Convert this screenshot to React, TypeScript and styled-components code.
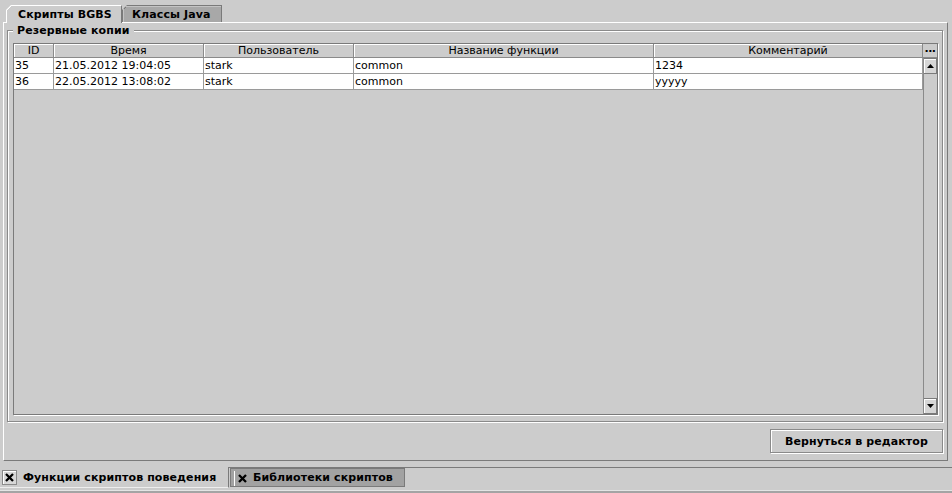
import React from 'react';
import styled, { createGlobalStyle } from 'styled-components';

const GlobalStyle = createGlobalStyle`
  html, body {
    margin: 0;
    padding: 0;
    background: #cccccc;
  }
  body {
    font-family: 'DejaVu Sans', 'Liberation Sans', sans-serif;
    font-size: 11px;
    color: #000;
  }
  * {
    box-sizing: border-box;
  }
`;

const Window = styled.div`
  width: 952px;
  height: 493px;
  display: flex;
  flex-direction: column;
  background: #cccccc;
  overflow: hidden;
`;

const Workspace = styled.div`
  height: 468px;
  border-bottom: 1px solid #7a7a7a;
  display: flex;
  flex-direction: column;
`;

const TopTabStrip = styled.div`
  height: 22px;
  display: flex;
  align-items: flex-end;
  padding-left: 6px;
  position: relative;
  z-index: 1;
`;

const TopTab = styled.div<{ $active?: boolean; $width: number }>`
  width: ${({ $width }) => $width}px;
  height: ${({ $active }) => ($active ? 18 : 17)}px;
  margin-bottom: ${({ $active }) => ($active ? -1 : 0)}px;
  padding: 2px 0 0 ${({ $active }) => ($active ? 11 : 9)}px;
  font-weight: bold;
  line-height: 13px;
  letter-spacing: 0.1px;
  white-space: nowrap;
  border-top: 1px solid ${({ $active }) => ($active ? '#ffffff' : '#7a7a7a')};
  border-left: 1px solid ${({ $active }) => ($active ? '#ffffff' : '#7a7a7a')};
  border-right: 1px solid #7a7a7a;
  background: linear-gradient(
    135deg,
    transparent 3.5px,
    ${({ $active }) => ($active ? '#ffffff' : '#7a7a7a')} 3.5px,
    ${({ $active }) => ($active ? '#ffffff' : '#7a7a7a')} 4.6px,
    ${({ $active }) => ($active ? '#cccccc' : '#a8a8a8')} 4.6px
  ) border-box;
  box-shadow: ${({ $active }) => ($active ? 'none' : 'inset 1px 1px 0 #c4c4c4')};
  clip-path: polygon(5px 0, 100% 0, 100% 100%, 0 100%, 0 5px);
`;

const TabPanel = styled.div`
  height: 439px;
  margin: 0 4px 0 3px;
  border: 1px solid;
  border-color: #ffffff #7a7a7a #7a7a7a #ffffff;
  display: flex;
  flex-direction: column;
`;

const GroupBox = styled.section`
  position: relative;
  flex: 1;
  min-height: 0;
  margin: 7px 4px 0 3px;
  padding: 12px 4px 6px 5px;
  border: 1px solid #8a8a8a;
  box-shadow: 1px 1px 0 #ffffff, inset 1px 1px 0 #ffffff;
  display: flex;
  flex-direction: column;
`;

const GroupTitle = styled.span`
  position: absolute;
  top: -7px;
  left: 5px;
  padding: 0 4px;
  background: #cccccc;
  font-weight: bold;
  line-height: 13px;
  letter-spacing: 0.1px;
`;

const TableFrame = styled.div`
  flex: 1;
  min-height: 0;
  display: flex;
  border: 1px solid #7a7a7a;
  box-shadow: 1px 1px 0 #ffffff;
`;

const TableBody = styled.div`
  flex: 1;
  display: flex;
  flex-direction: column;
  background: #cccccc;
`;

const Row = styled.div`
  display: grid;
  grid-template-columns: 40px 150px 150px 300px 269px;
`;

const HeaderCell = styled.div`
  height: 14px;
  line-height: 13px;
  text-align: center;
  white-space: nowrap;
  overflow: hidden;
  border-right: 1px solid #8a8a8a;
  border-bottom: 1px solid #8a8a8a;
  box-shadow: inset 1px 1px 0 #ffffff;
`;

const Cell = styled.div`
  height: 16px;
  line-height: 15px;
  padding-left: 1px;
  white-space: nowrap;
  overflow: hidden;
  background: #ffffff;
  border-right: 1px solid #9a9a9a;
  border-bottom: 1px solid #9a9a9a;
`;

const ScrollColumn = styled.div`
  width: 15px;
  display: flex;
  flex-direction: column;
`;

const Corner = styled.div`
  height: 14px;
  border-bottom: 1px solid #8a8a8a;
  font-weight: bold;
  line-height: 10px;
  text-align: center;
  letter-spacing: -0.5px;
`;

const Track = styled.div`
  flex: 1;
  display: flex;
  flex-direction: column;
  justify-content: space-between;
  border-left: 1px solid #8a8a8a;
  background: #cccccc;
`;

const ArrowButton = styled.div`
  height: 16px;
  display: flex;
  align-items: center;
  justify-content: center;
  background: #d6d6d6;
  border: 1px solid #7a7a7a;
  border-left: none;
  box-shadow: inset 1px 1px 0 #ffffff;
`;

const ButtonRow = styled.div`
  display: flex;
  justify-content: flex-end;
  padding: 7px 4px 7px 0;
`;

const Button = styled.button`
  width: 173px;
  height: 24px;
  margin: 0;
  padding: 0;
  font-family: inherit;
  font-size: 11px;
  font-weight: bold;
  letter-spacing: 0.1px;
  color: #000;
  background: #cccccc;
  border: 1px solid #8a8a8a;
  box-shadow: 1px 1px 0 #ffffff, inset 1px 1px 0 #ffffff;
  border-radius: 0;
`;

const BottomTabStrip = styled.div`
  height: 22px;
  display: flex;
  align-items: flex-start;
`;

const BottomTab = styled.div<{ $active?: boolean; $width: number }>`
  width: ${({ $width }) => $width}px;
  height: ${({ $active }) => ($active ? 21 : 19)}px;
  margin-top: ${({ $active }) => ($active ? -1 : 0)}px;
  margin-left: ${({ $active }) => ($active ? 0 : 1)}px;
  display: flex;
  align-items: center;
  gap: 6px;
  padding-left: ${({ $active }) => ($active ? 2 : 3)}px;
  font-weight: bold;
  letter-spacing: 0.1px;
  white-space: nowrap;
  background: ${({ $active }) => ($active ? '#cccccc' : '#a2a2a2')};
  border-right: 1px solid #7a7a7a;
  border-bottom: 1px solid ${({ $active }) => ($active ? '#eeeeee' : '#7a7a7a')};
  border-top: ${({ $active }) => ($active ? 'none' : '1px solid #7a7a7a')};
  border-left: ${({ $active }) => ($active ? 'none' : '1px solid #7a7a7a')};
`;

const CloseBox = styled.span<{ $framed?: boolean }>`
  width: ${({ $framed }) => ($framed ? 15 : 13)}px;
  height: 15px;
  display: flex;
  align-items: center;
  justify-content: center;
  background: ${({ $framed }) => ($framed ? '#d8d8d8' : 'transparent')};
  border: ${({ $framed }) => ($framed ? '1px solid #8a8a8a' : 'none')};
  border-left: 1px solid ${({ $framed }) => ($framed ? '#8a8a8a' : '#ffffff')};
  box-shadow: ${({ $framed }) => ($framed ? 'inset 1px 1px 0 #ffffff' : 'none')};
  padding-left: ${({ $framed }) => ($framed ? 0 : 3)}px;
  margin-top: 1px;
`;

const Footer = styled.div`
  height: 3px;
  border-top: 1px solid #e4e4e4;
  background: #a4a4a4;
`;

const columns = ['ID', 'Время', 'Пользователь', 'Название функции', 'Комментарий'];

const rows = [
  { id: '35', time: '21.05.2012 19:04:05', user: 'stark', fn: 'common', comment: '1234' },
  { id: '36', time: '22.05.2012 13:08:02', user: 'stark', fn: 'common', comment: 'yyyyy' },
];

const Arrow = ({ up }: { up?: boolean }) => (
  <svg width="7" height="4" viewBox="0 0 7 4">
    <polygon points={up ? '3.5,0 7,4 0,4' : '0,0 7,0 3.5,4'} fill="#000" />
  </svg>
);

const Cross = () => (
  <svg width="9" height="9" viewBox="0 0 9 9">
    <path d="M1 1 L8 8 M8 1 L1 8" stroke="#000" strokeWidth="2.3" />
  </svg>
);

export default function App() {
  return (
    <>
      <GlobalStyle />
      <Window>
        <Workspace>
          <TopTabStrip>
            <TopTab $active $width={116}>Скрипты BGBS</TopTab>
            <TopTab $width={100}>Классы Java</TopTab>
          </TopTabStrip>
          <TabPanel>
            <GroupBox>
              <GroupTitle>Резервные копии</GroupTitle>
              <TableFrame>
                <TableBody>
                  <Row>
                    {columns.map((c) => (
                      <HeaderCell key={c}>{c}</HeaderCell>
                    ))}
                  </Row>
                  {rows.map((r) => (
                    <Row key={r.id}>
                      <Cell>{r.id}</Cell>
                      <Cell>{r.time}</Cell>
                      <Cell>{r.user}</Cell>
                      <Cell>{r.fn}</Cell>
                      <Cell>{r.comment}</Cell>
                    </Row>
                  ))}
                </TableBody>
                <ScrollColumn>
                  <Corner>...</Corner>
                  <Track>
                    <ArrowButton>
                      <Arrow up />
                    </ArrowButton>
                    <ArrowButton>
                      <Arrow />
                    </ArrowButton>
                  </Track>
                </ScrollColumn>
              </TableFrame>
            </GroupBox>
            <ButtonRow>
              <Button>Вернуться в редактор</Button>
            </ButtonRow>
          </TabPanel>
        </Workspace>
        <BottomTabStrip>
          <BottomTab $active $width={229}>
            <CloseBox $framed>
              <Cross />
            </CloseBox>
            Функции скриптов поведения
          </BottomTab>
          <BottomTab $width={175}>
            <CloseBox>
              <Cross />
            </CloseBox>
            Библиотеки скриптов
          </BottomTab>
        </BottomTabStrip>
        <Footer />
      </Window>
    </>
  );
}
